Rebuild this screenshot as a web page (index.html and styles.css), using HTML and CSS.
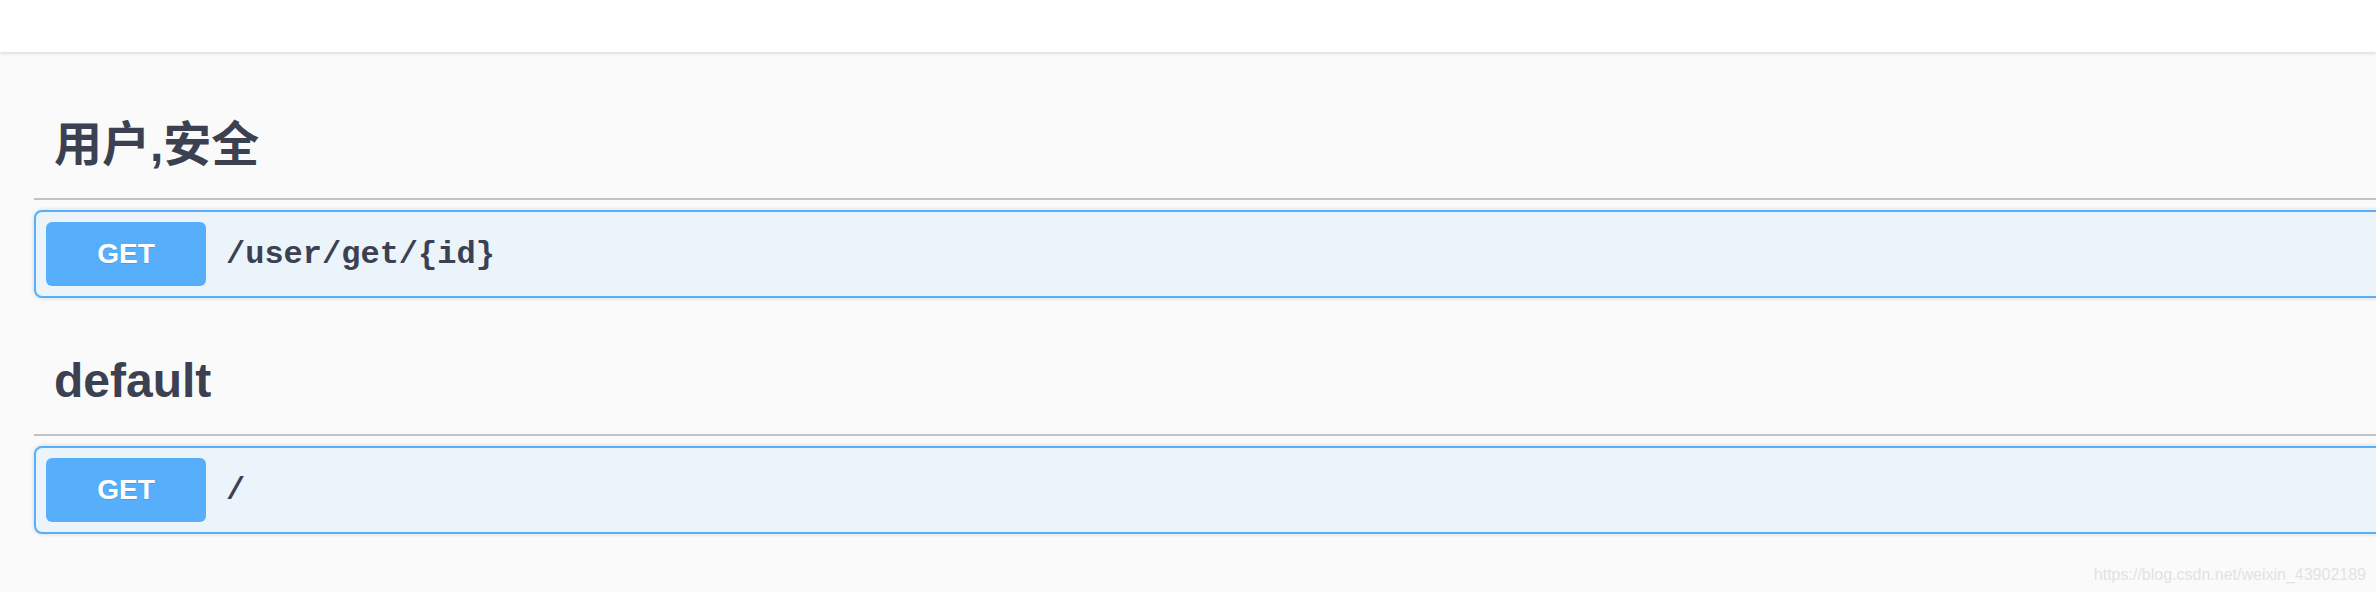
FILE: index.html
```html
<!DOCTYPE html>
<html lang="zh-CN">
<head>
<meta charset="utf-8">
<title>Swagger UI</title>
<link rel="stylesheet" href="styles.css">
</head>
<body>
<div class="topbar"></div>
<main class="wrapper">
  <section class="tag-section">
    <h4 class="opblock-tag">用户,安全</h4>
    <div class="opblock">
      <span class="method">GET</span>
      <span class="path">/user/get/{id}</span>
    </div>
  </section>
  <section class="tag-section">
    <h4 class="opblock-tag">default</h4>
    <div class="opblock">
      <span class="method">GET</span>
      <span class="path">/</span>
    </div>
  </section>
</main>
<div class="watermark">https://blog.csdn.net/weixin_43902189</div>
</body>
</html>
```
FILE: styles.css
```css
html, body {
  margin: 0;
  padding: 0;
  overflow: hidden;
}
body {
  background: #fafafa;
  width: 2376px;
  height: 592px;
  position: relative;
  font-family: "Liberation Sans", "Noto Sans CJK SC", sans-serif;
  color: #3b4151;
}
.topbar {
  height: 52px;
  background: #ffffff;
  box-shadow: 0 1px 4px rgba(0, 0, 0, 0.16);
  position: relative;
  z-index: 1;
}
.wrapper {
  padding: 40px 0 0 34px;
  margin-right: -40px;
}
.opblock-tag {
  margin: 0 0 10px;
  padding: 20px 40px 20px 20px;
  height: 66px;
  line-height: 66px;
  font-size: 48px;
  font-weight: 700;
  color: #3b4151;
  border-bottom: 2px solid rgba(59, 65, 81, 0.3);
}
.opblock {
  display: flex;
  align-items: center;
  margin: 0 0 30px;
  padding: 10px;
  border: 2px solid #57aefa;
  border-radius: 8px;
  background: #ebf3fb;
  box-shadow: 0 0 4px rgba(0, 0, 0, 0.16);
}
.method {
  display: flex;
  align-items: center;
  justify-content: center;
  width: 160px;
  height: 64px;
  border-radius: 6px;
  background: #57aefa;
  color: #ffffff;
  font-size: 28px;
  font-weight: 700;
  text-shadow: 0 1px 0 rgba(0, 0, 0, 0.1);
}
.path {
  padding-left: 20px;
  font-family: "Liberation Mono", monospace;
  font-size: 32px;
  font-weight: 700;
  color: #3b4151;
}
.watermark {
  position: absolute;
  right: 10px;
  bottom: 8px;
  font-size: 16px;
  color: #e2e2e2;
}
```
